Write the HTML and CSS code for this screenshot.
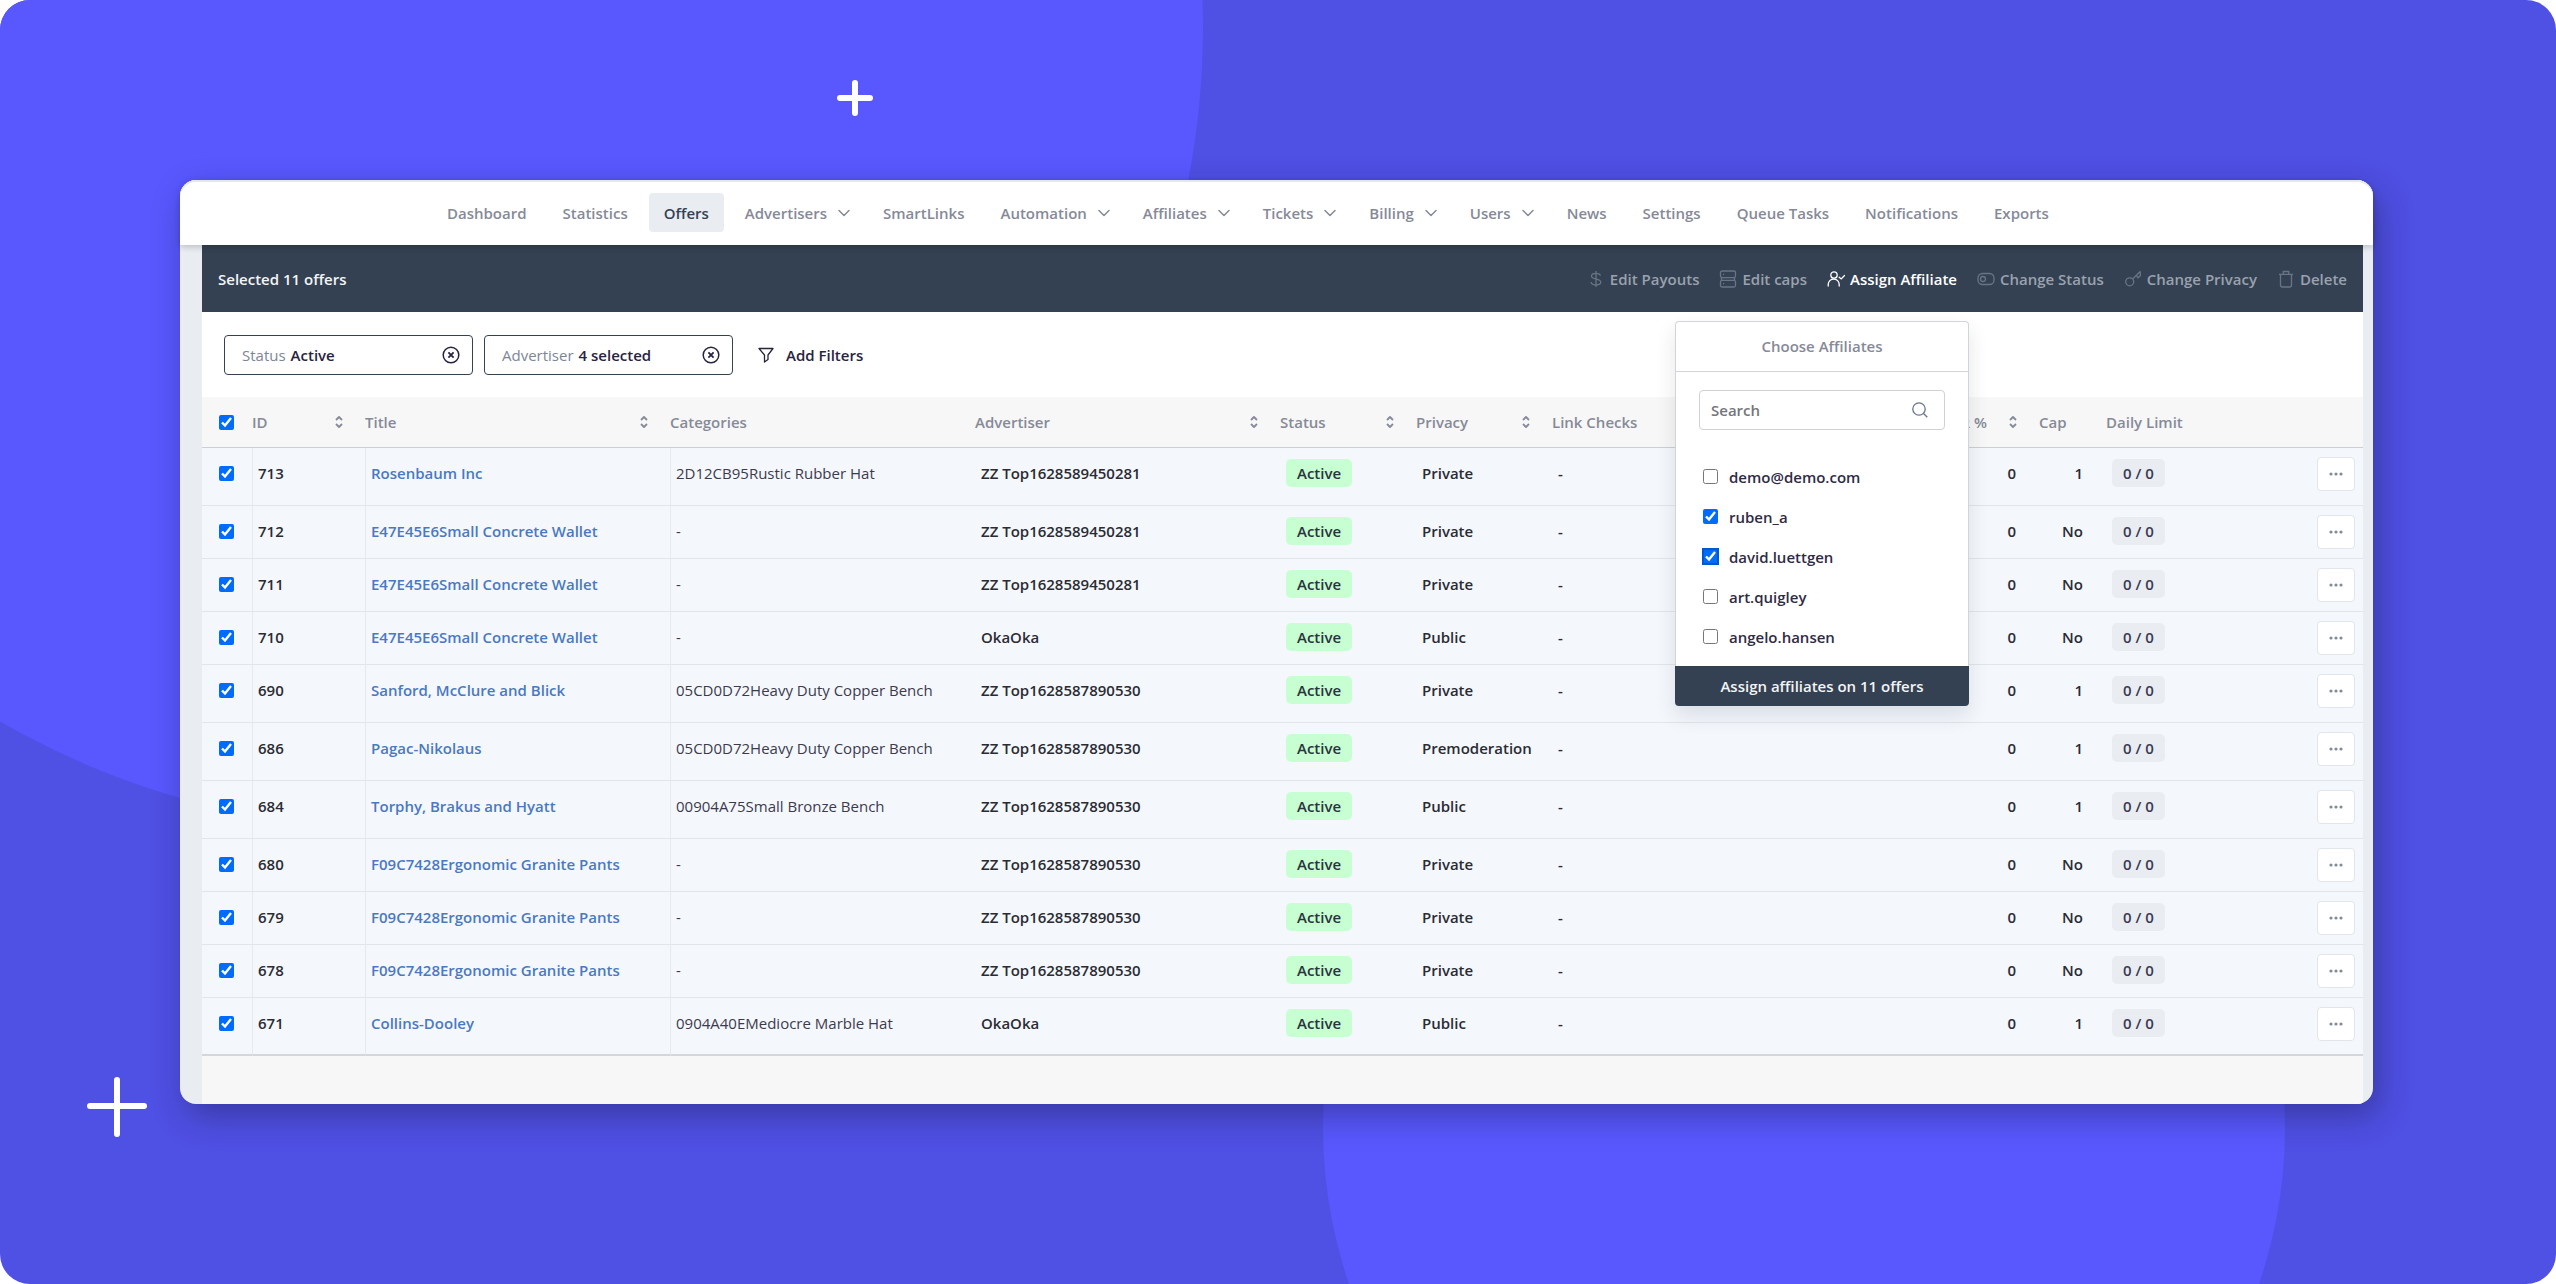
FILE: index.html
```html
<!DOCTYPE html>
<html lang="en">
<head>
<meta charset="utf-8">
<title>Offers</title>
<link rel="stylesheet" href="styles.css">
</head>
<body>
<svg class="defs" aria-hidden="true">
  <symbol id="chevron" viewBox="0 0 12 8"><path d="M1 1.500l5 5 5-5" fill="none" stroke="currentColor" stroke-width="1.500" stroke-linecap="round" stroke-linejoin="round"/></symbol>
  <symbol id="sort" viewBox="0 0 8 12"><path d="M1 4l3-3 3 3M1 8l3 3 3-3" fill="none" stroke="currentColor" stroke-width="1.800" stroke-linejoin="round"/></symbol>
  <symbol id="clear" viewBox="0 0 18 18"><g fill="none" stroke="currentColor"><circle cx="9" cy="9" r="7.800" stroke-width="1.500"/><path d="M6.400 6.400l5.200 5.200M11.600 6.400l-5.200 5.200" stroke-width="1.800"/></g></symbol>
  <symbol id="dots" viewBox="0 0 14 4"><g fill="currentColor"><circle cx="2" cy="2" r="1.600"/><circle cx="7" cy="2" r="1.600"/><circle cx="12" cy="2" r="1.600"/></g></symbol>
</svg>
<div class="stage">
  <svg class="backdrop" aria-hidden="true">
    <circle cx="401" cy="27" r="802" fill="#5858fe"/>
    <circle cx="1804" cy="1128" r="481" fill="#5858fe"/>
    <g stroke="#fff" stroke-width="6" stroke-linecap="round">
      <path d="M855 83v30M840 98h30"/>
      <path d="M117 1080v54M90 1106h54"/>
    </g>
  </svg>
  <main class="window">
    <header class="topbar">
      <nav class="nav">
        <a href="#">Dashboard</a>
        <a href="#">Statistics</a>
        <a href="#" class="current">Offers</a>
        <a href="#" class="drop">Advertisers<svg><use href="#chevron"/></svg></a>
        <a href="#">SmartLinks</a>
        <a href="#" class="drop">Automation<svg><use href="#chevron"/></svg></a>
        <a href="#" class="drop">Affiliates<svg><use href="#chevron"/></svg></a>
        <a href="#" class="drop">Tickets<svg><use href="#chevron"/></svg></a>
        <a href="#" class="drop">Billing<svg><use href="#chevron"/></svg></a>
        <a href="#" class="drop">Users<svg><use href="#chevron"/></svg></a>
        <a href="#">News</a>
        <a href="#">Settings</a>
        <a href="#">Queue Tasks</a>
        <a href="#">Notifications</a>
        <a href="#">Exports</a>
      </nav>
    </header>
    <div class="workspace">
      <section class="bulk">
        <span class="bulk-count">Selected 11 offers</span>
        <div class="bulk-actions">
          <button type="button"><svg viewBox="0 0 18 18"><path d="M9 1v16M13.500 5.500C13 4 11.500 3.300 9 3.300S4.500 4.200 4.500 6.100c0 4.300 9.300 1.700 9.300 6 0 1.900-1.900 2.900-4.800 2.900s-4.600-1-5-2.800"/></svg>Edit Payouts</button>
          <button type="button"><svg viewBox="0 0 18 18"><rect x="1.500" y="1" width="15" height="6.600" rx="1.500"/><rect x="1.500" y="10.400" width="15" height="6.600" rx="1.500"/><path d="M4 4.300h1.200M4 13.700h1.200M2.500 7.600v2.800M15.500 7.600v2.800"/></svg>Edit caps</button>
          <div class="assign">
            <button type="button" class="on"><svg viewBox="0 0 18 18"><circle cx="7" cy="5" r="3.200"/><path d="M1.200 16v-1.500a5.300 5.300 0 0 1 11 0V16M12.200 7.200l2 1.700L17.500 5.500"/></svg>Assign Affiliate</button>
            <div class="popup">
              <h2>Choose Affiliates</h2>
              <div class="popup-body">
                <label class="search">
                  <input type="text" placeholder="Search" aria-label="Search">
                  <svg viewBox="0 0 16 16"><circle cx="7" cy="7" r="6.200"/><path d="M11.500 11.500L15.300 15.300"/></svg>
                </label>
                <ul class="people">
                  <li><label><input type="checkbox"><span>demo@demo.com</span></label></li>
                  <li><label><input type="checkbox" checked><span>ruben_a</span></label></li>
                  <li><label><input type="checkbox" checked class="focused"><span>david.luettgen</span></label></li>
                  <li><label><input type="checkbox"><span>art.quigley</span></label></li>
                  <li><label><input type="checkbox"><span>angelo.hansen</span></label></li>
                </ul>
              </div>
              <button type="button" class="submit">Assign affiliates on 11 offers</button>
            </div>
          </div>
          <button type="button"><svg viewBox="0 0 18 18"><rect x="1" y="3.500" width="16" height="11" rx="4.500"/><circle cx="6" cy="9" r="2.500"/></svg>Change Status</button>
          <button type="button"><svg viewBox="0 0 18 18"><circle cx="5.700" cy="11.800" r="4"/><path d="M8.600 9L16.500 1.200M12.200 5.400l1.800 2.300 2.500-2.200-.4-4"/></svg>Change Privacy</button>
          <button type="button"><svg viewBox="0 0 18 18"><path d="M2 4.300h14M3.500 4.300v10.700a2 2 0 0 0 2 2h7a2 2 0 0 0 2-2V4.300M6.300 4.300V1.500h5.400v2.800"/></svg>Delete</button>
        </div>
      </section>
      <section class="filters">
        <button type="button" class="chip"><span>Status</span><b>Active</b><svg><use href="#clear"/></svg></button>
        <button type="button" class="chip"><span>Advertiser</span><b>4 selected</b><svg><use href="#clear"/></svg></button>
        <button type="button" class="add"><svg viewBox="0 0 16 16"><path d="M1 1.500h14L10 8v4.500L6.500 15V8z"/></svg>Add Filters</button>
      </section>
      <table class="offers">
        <colgroup><col class="c-check"><col class="c-id"><col class="c-wide"><col class="c-wide"><col class="c-wide"><col class="c-mid"><col class="c-mid"><col><col class="c-rate"><col class="c-cap"><col class="c-limit"><col class="c-menu"></colgroup>
        <thead><tr>
          <th class="check"><input type="checkbox" checked aria-label="Select all offers"></th>
          <th><div>ID<svg><use href="#sort"/></svg></div></th>
          <th><div>Title<svg><use href="#sort"/></svg></div></th>
          <th>Categories</th>
          <th><div>Advertiser<svg><use href="#sort"/></svg></div></th>
          <th><div>Status<svg><use href="#sort"/></svg></div></th>
          <th><div>Privacy<svg><use href="#sort"/></svg></div></th>
          <th>Link Checks</th>
          <th><div>CR %<svg><use href="#sort"/></svg></div></th>
          <th>Cap</th>
          <th>Daily Limit</th>
          <th></th>
        </tr></thead>
        <tbody id="rows"></tbody>
      </table>
      <div class="footer"></div>
    </div>
  </main>
</div>
<script src="offers.js"></script>
</body>
</html>
```
FILE: offers.js
```js
const offers = [
  [713, 'Rosenbaum Inc', '2D12CB95Rustic Rubber Hat', 'ZZ Top1628589450281', 'Private', '1'],
  [712, 'E47E45E6Small Concrete Wallet', '-', 'ZZ Top1628589450281', 'Private', 'No'],
  [711, 'E47E45E6Small Concrete Wallet', '-', 'ZZ Top1628589450281', 'Private', 'No'],
  [710, 'E47E45E6Small Concrete Wallet', '-', 'OkaOka', 'Public', 'No'],
  [690, 'Sanford, McClure and Blick', '05CD0D72Heavy Duty Copper Bench', 'ZZ Top1628587890530', 'Private', '1'],
  [686, 'Pagac-Nikolaus', '05CD0D72Heavy Duty Copper Bench', 'ZZ Top1628587890530', 'Premoderation', '1'],
  [684, 'Torphy, Brakus and Hyatt', '00904A75Small Bronze Bench', 'ZZ Top1628587890530', 'Public', '1'],
  [680, 'F09C7428Ergonomic Granite Pants', '-', 'ZZ Top1628587890530', 'Private', 'No'],
  [679, 'F09C7428Ergonomic Granite Pants', '-', 'ZZ Top1628587890530', 'Private', 'No'],
  [678, 'F09C7428Ergonomic Granite Pants', '-', 'ZZ Top1628587890530', 'Private', 'No'],
  [671, 'Collins-Dooley', '0904A40EMediocre Marble Hat', 'OkaOka', 'Public', '1']
];

document.getElementById('rows').innerHTML = offers.map(([id, title, category, advertiser, privacy, cap]) => `
  <tr class="${category === '-' ? '' : 'tall'}">
    <td class="check"><input type="checkbox" checked aria-label="Select offer ${id}"></td>
    <td class="ruled">${id}</td>
    <td class="ruled"><a href="#">${title}</a></td>
    <td class="ruled category">${category}</td>
    <td>${advertiser}</td>
    <td><span class="tag active">Active</span></td>
    <td>${privacy}</td>
    <td>-</td>
    <td class="num">0</td>
    <td class="num">${cap}</td>
    <td><span class="tag limit">0 / 0</span></td>
    <td class="menu"><button type="button" aria-label="Offer ${id} actions"><svg><use href="#dots"/></svg></button></td>
  </tr>`).join('');
```
FILE: styles.css
```css
* { box-sizing: border-box; }
body {
  margin: 0;
  background: #fff;
  color: #2b2b33;
  font: 600 15px/20px "Open Sans", "Noto Sans", sans-serif;
}
button, input { font: inherit; color: inherit; margin: 0; }
button { border: 0; background: none; padding: 0; cursor: pointer; }
a { color: inherit; text-decoration: none; }
.defs { display: none; }
input[type="checkbox"] {
  width: 15px;
  height: 15px;
  accent-color: #006cff;
}

/* backdrop */
.stage {
  position: relative;
  min-height: 100vh;
  padding: 180px 183px 179px 180px;
  border-radius: 30px;
  background: #4f50e4;
  overflow: hidden;
}
.backdrop {
  position: absolute;
  inset: 0;
  width: 100%;
  height: 100%;
}
.window {
  position: relative;
  border-radius: 16px;
  background: #e9edf2;
  box-shadow: 6px 12px 32px rgba(20, 20, 60, .38);
}

/* top navigation */
.topbar {
  position: relative;
  z-index: 1;
  height: 65px;
  padding: 13px 16px 0 252px;
  border-radius: 16px 16px 0 0;
  background: #fff;
  box-shadow: inset 0 2px #e6e6ee, 0 2px 6px rgba(0, 0, 0, .2);
}
.nav { display: flex; gap: 6px; }
.nav a {
  display: flex;
  align-items: center;
  gap: 11px;
  height: 39px;
  padding: 0 15px;
  border-radius: 4px;
  color: #868a98;
}
.nav .drop { padding-right: 12px; }
.nav .current { background: #e9edf2; color: #344152; }
.nav svg { width: 12px; height: 8px; }

/* bulk action bar */
.workspace {
  padding: 0 10px 0 22px;
  border-radius: 0 0 16px 16px;
  overflow: hidden;
}
.bulk {
  display: flex;
  align-items: center;
  justify-content: space-between;
  height: 67px;
  padding: 0 16px;
  background: #344152;
}
.bulk-count { color: #f2f4f6; }
.bulk-actions { display: flex; gap: 20px; color: #9aa2ae; }
.bulk-actions > button, .assign > button {
  display: flex;
  align-items: center;
  gap: 5px;
}
.bulk-actions svg {
  width: 18px;
  height: 18px;
  fill: none;
  stroke: #697584;
  stroke-width: 1.3;
}
.bulk-actions .on { color: #fff; }
.bulk-actions .on svg { stroke: #fff; stroke-linecap: round; }
.assign { position: relative; }

/* affiliate picker */
.popup {
  position: absolute;
  top: 52px;
  right: -12px;
  z-index: 2;
  width: 294px;
  border: 1px solid #d2d4da;
  border-bottom: 0;
  border-radius: 4px;
  background: #fff;
  box-shadow: 0 10px 20px rgba(30, 40, 60, .12);
}
.popup h2 {
  margin: 0;
  padding: 14px 0 15px;
  border-bottom: 1px solid #d2d4da;
  color: #868a98;
  font: inherit;
  text-align: center;
}
.popup-body { padding: 18px 23px 9px; }
.search {
  display: flex;
  align-items: center;
  height: 40px;
  padding: 0 16px 0 11px;
  border: 1px solid #cfd1d6;
  border-radius: 4px;
}
.search input {
  flex: 1;
  min-width: 0;
  padding: 0;
  border: 0;
  outline: 0;
}
.search input::placeholder { color: #75757a; opacity: 1; }
.bulk-actions .search svg { width: 16px; height: 16px; stroke: #68758c; }
.people { margin: 27px 0 0; padding: 0; list-style: none; }
.people label {
  display: flex;
  align-items: center;
  gap: 11px;
  height: 40px;
  padding-left: 4px;
  color: #2f2b45;
}
.focused { outline: 2px solid #0058cf; outline-offset: -1px; border-radius: 3px; }
.submit {
  display: block;
  width: calc(100% + 2px);
  height: 40px;
  margin: 0 -1px;
  border-radius: 0 0 4px 4px;
  background: #344152;
  color: #f2f4f6;
}

/* filters */
.filters {
  display: flex;
  align-items: center;
  gap: 11px;
  height: 85px;
  padding: 0 22px;
  background: #fff;
  color: #28233f;
}
.chip {
  display: flex;
  align-items: center;
  gap: 5px;
  width: 249px;
  height: 40px;
  padding: 0 12px 0 17px;
  border: 1px solid #344152;
  border-radius: 4px;
}
.chip span { color: #7d8598; font-weight: 400; }
.chip b { font-weight: 600; }
.chip svg { width: 18px; height: 18px; margin-left: auto; }
.add { display: flex; align-items: center; gap: 12px; margin-left: 14px; }
.add svg {
  width: 16px;
  height: 16px;
  fill: none;
  stroke: currentColor;
  stroke-width: 1.3;
  stroke-linejoin: round;
}

/* offers table */
.offers {
  width: 100%;
  table-layout: fixed;
  border-collapse: separate;
  border-spacing: 0;
  background: #f4f8fd;
}
.c-check { width: 50px; }
.c-id { width: 113px; }
.c-wide { width: 305px; }
.c-mid { width: 136px; }
.c-rate { width: 88px; }
.c-cap { width: 67px; }
.c-limit { width: 204px; }
.c-menu { width: 53px; }
.offers th {
  height: 51px;
  padding: 0;
  border-bottom: 1px solid #ccd0d6;
  background: #f7f7f7;
  color: #868a98;
  font-weight: 600;
  text-align: left;
}
.offers th div {
  display: flex;
  align-items: center;
  justify-content: space-between;
  padding-right: 22px;
}
.offers th svg { width: 8px; height: 12px; }
.offers td {
  height: 53px;
  padding: 9px 0 9px 6px;
  border-bottom: 1px solid #e2e5e9;
  line-height: 33px;
  vertical-align: top;
  white-space: nowrap;
}
.offers .tall td { height: 58px; }
.offers tbody tr:last-child td { border-bottom: 2px solid #d3d6da; }
.offers .ruled { border-left: 1px solid #e8e9ea; padding-left: 5px; }
.offers td a { color: #4b78c2; }
.offers .category { color: #3d3a4d; font-weight: 400; }
.offers .check { padding-left: 17px; }
.offers .check input { display: block; }
.offers td.check input { margin-top: 9px; }
.offers .num { padding-right: 23px; text-align: right; }
.tag {
  display: inline-block;
  padding: 0 11px;
  border-radius: 5px;
  line-height: 28px;
}
.active { background: #c8ffd2; color: #28343e; }
.limit { background: #e9edf2; color: #3a3a52; }
.offers .menu { padding-left: 7px; }
.menu button {
  display: flex;
  align-items: center;
  justify-content: center;
  width: 38px;
  height: 34px;
  border: 1px solid #e2e5e9;
  border-radius: 4px;
  background: #fff;
  color: #858a98;
}
.menu svg { width: 14px; height: 4px; }
.footer { height: 48px; background: #f7f7f7; }
```
